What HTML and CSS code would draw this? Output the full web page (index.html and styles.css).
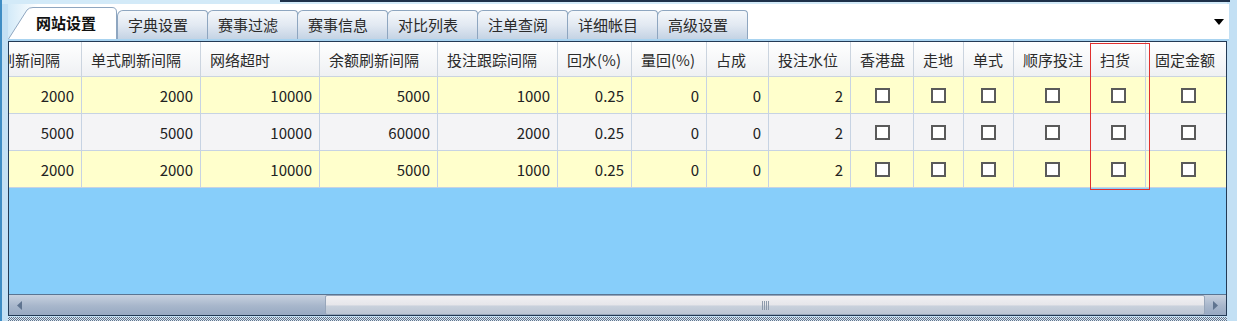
FILE: index.html
```html
<!DOCTYPE html>
<html lang="zh-CN">
<head>
    <meta charset="UTF-8">
    <title>网站设置</title>
    <link rel="stylesheet" href="styles.css">
</head>
<body>
    <div class="window">
        <div class="topbar"><div class="topbox"></div></div>
        <div class="tabbar">
            <div class="tab tab-active">
                <svg class="tab-shape" width="110" height="32" viewBox="0 0 110 32">
                    <path d="M0.5 32 L19 3 Q21 0.5 25 0.5 L104 0.5 Q108.5 0.5 108.5 5 L108.5 32" fill="#ffffff" stroke="#8ea6c0"/>
                </svg>
                <span>网站设置</span>
            </div>
            <div class="tab">字典设置</div>
            <div class="tab">赛事过滤</div>
            <div class="tab">赛事信息</div>
            <div class="tab">对比列表</div>
            <div class="tab">注单查阅</div>
            <div class="tab">详细帐目</div>
            <div class="tab">高级设置</div>
            <svg class="drop" width="10" height="6" viewBox="0 0 10 6"><path d="M0 0 L10 0 L5 6 Z" fill="#000"/></svg>
        </div>

        <div class="grid">
            <div class="grid-view">
                <div class="rows">
                    <div class="row row-head">
                        <div class="cell">刷新间隔</div>
                        <div class="cell">单式刷新间隔</div>
                        <div class="cell">网络超时</div>
                        <div class="cell">余额刷新间隔</div>
                        <div class="cell">投注跟踪间隔</div>
                        <div class="cell">回水(%)</div>
                        <div class="cell">量回(%)</div>
                        <div class="cell">占成</div>
                        <div class="cell">投注水位</div>
                        <div class="cell">香港盘</div>
                        <div class="cell">走地</div>
                        <div class="cell">单式</div>
                        <div class="cell">顺序投注</div>
                        <div class="cell">扫货</div>
                        <div class="cell">固定金额</div>
                    </div>
                    <div class="row row-yellow">
                        <div class="cell num">2000</div>
                        <div class="cell num">2000</div>
                        <div class="cell num">10000</div>
                        <div class="cell num">5000</div>
                        <div class="cell num">1000</div>
                        <div class="cell num">0.25</div>
                        <div class="cell num">0</div>
                        <div class="cell num">0</div>
                        <div class="cell num">2</div>
                        <div class="cell chk"><span class="box"></span></div>
                        <div class="cell chk"><span class="box"></span></div>
                        <div class="cell chk"><span class="box"></span></div>
                        <div class="cell chk"><span class="box"></span></div>
                        <div class="cell chk"><span class="box"></span></div>
                        <div class="cell chk"><span class="box"></span></div>
                    </div>
                    <div class="row row-grey">
                        <div class="cell num">5000</div>
                        <div class="cell num">5000</div>
                        <div class="cell num">10000</div>
                        <div class="cell num">60000</div>
                        <div class="cell num">2000</div>
                        <div class="cell num">0.25</div>
                        <div class="cell num">0</div>
                        <div class="cell num">0</div>
                        <div class="cell num">2</div>
                        <div class="cell chk"><span class="box"></span></div>
                        <div class="cell chk"><span class="box"></span></div>
                        <div class="cell chk"><span class="box"></span></div>
                        <div class="cell chk"><span class="box"></span></div>
                        <div class="cell chk"><span class="box"></span></div>
                        <div class="cell chk"><span class="box"></span></div>
                    </div>
                    <div class="row row-yellow">
                        <div class="cell num">2000</div>
                        <div class="cell num">2000</div>
                        <div class="cell num">10000</div>
                        <div class="cell num">5000</div>
                        <div class="cell num">1000</div>
                        <div class="cell num">0.25</div>
                        <div class="cell num">0</div>
                        <div class="cell num">0</div>
                        <div class="cell num">2</div>
                        <div class="cell chk"><span class="box"></span></div>
                        <div class="cell chk"><span class="box"></span></div>
                        <div class="cell chk"><span class="box"></span></div>
                        <div class="cell chk"><span class="box"></span></div>
                        <div class="cell chk"><span class="box"></span></div>
                        <div class="cell chk"><span class="box"></span></div>
                    </div>
                </div>
                <!-- highlight round the 扫货 column -->
                <div class="mark"></div>
            </div>
            <div class="hscroll">
                <div class="sbtn"><svg width="5" height="9" viewBox="0 0 5 9"><path d="M5 0 L0 4.5 L5 9 Z" fill="#5f7490"/></svg></div>
                <div class="track-left"></div>
                <div class="thumb"><span class="grip"></span></div>
                <div class="sbtn"><svg width="5" height="9" viewBox="0 0 5 9"><path d="M0 0 L5 4.5 L0 9 Z" fill="#5f7490"/></svg></div>
            </div>
        </div>
        <div class="splitter"></div>
    </div>
</body>
</html>
```

FILE: styles.css
```css
body {
    margin: 0;
    background-color: #c3e0f4;
    font-family: "Microsoft YaHei", "Noto Sans CJK SC", sans-serif;
    font-size: 15px;
    color: #222;
}

.window {
    width: 1237px;
    height: 321px;
    box-sizing: border-box;
    border-left: 2px solid #3f8dc4;
    padding-left: 6px;
    padding-right: 10px;
    overflow: hidden;
}

.topbar {
    height: 4px;
    margin-left: -6px;
    padding-left: 278px;
    background-color: #d3eaf8;
}
.topbox {
    width: 950px;
    height: 2px;
    background-color: #1d3049;
}

.tabbar {
    display: flex;
    align-items: flex-end;
    height: 35px;
    margin-right: -2px;
    background: linear-gradient(90deg, #d3eaf8 0, #ffffff 30px);
    border-bottom: 2px solid #a8d3f0;
    position: relative;
}
.tab {
    height: 29px;
    box-sizing: border-box;
    padding: 0 19px 0 10px;
    margin-right: -1px;
    line-height: 28px;
    color: #2a2a2a;
    border: 1px solid #8ea6c0;
    border-bottom: none;
    border-radius: 6px 4px 0 0;
    background: linear-gradient(#f5f8fb, #e2e9f2 50%, #c4d3e4);
}
.tab-active {
    position: relative;
    width: 110px;
    height: 32px;
    padding: 0 0 0 28px;
    border: none;
    background: none;
    font-weight: bold;
    color: #111;
    line-height: 32px;
    z-index: 1;
}
.tab-active span {
    position: relative;
}
.tab-shape {
    position: absolute;
    left: 0;
    top: 0;
}
.drop {
    margin-left: auto;
    margin-right: 5px;
    align-self: center;
}

.grid {
    width: 1219px;
    height: 275px;
    box-sizing: border-box;
    border: 1px solid #233a55;
    display: flex;
    flex-direction: column;
}
.grid-view {
    flex: 1;
    position: relative;
    overflow: hidden;
    background-color: #87cefa;
}
.rows {
    margin-left: -18px;
}
.row {
    display: grid;
    grid-template-columns: 91px 119px 119px 118px 120px 74px 75px 62px 82px 63px 50px 50px 77px 55px 86px;
    height: 37px;
}
.row-head {
    height: 35px;
    background: linear-gradient(#ffffff, #eef0f3);
}
.row-yellow {
    background-color: #ffffcc;
}
.row-grey {
    background-color: #f4f4f6;
}
.cell {
    box-sizing: border-box;
    border-right: 1px solid #c7d3e3;
    border-bottom: 1px solid #c7d3e3;
    display: flex;
    align-items: center;
    padding: 0 9px;
    white-space: nowrap;
}
.row-head .cell {
    color: #2b2b2b;
    border-color: #cbd4df;
}
.num {
    justify-content: flex-end;
    padding-right: 7px;
}
.chk {
    justify-content: center;
    padding: 0;
}
.box {
    width: 15px;
    height: 15px;
    box-sizing: border-box;
    border: 2px solid #5a5a5a;
    background-color: #ffffff;
}

.mark {
    position: absolute;
    left: 1081px;
    top: 1px;
    width: 60px;
    height: 147px;
    box-sizing: border-box;
    border: 1px solid #e0302e;
}

.hscroll {
    height: 20px;
    display: flex;
    border-top: 1px solid #5a7592;
    background: linear-gradient(#c7d1df, #a7b6cb 55%, #97a9c2);
}
.sbtn {
    width: 21px;
    display: flex;
    align-items: center;
    justify-content: center;
}
.track-left {
    width: 295px;
}
.thumb {
    flex: 1;
    box-sizing: border-box;
    border: 1px solid #97a6ba;
    border-radius: 2px;
    background: linear-gradient(#f0f0f3, #e6e6ea 50%, #c9d1dc 55%, #bcc6d4);
    display: flex;
    justify-content: center;
    align-items: center;
}
.grip {
    width: 7px;
    height: 9px;
    background: repeating-linear-gradient(90deg, #8c99aa 0 1px, transparent 1px 2px);
}

.splitter {
    height: 6px;
    margin-top: 1px;
    background: repeating-conic-gradient(#5f748d 0 25%, #dbe6f0 0 50%) 0 0 / 2px 2px;
}
```
